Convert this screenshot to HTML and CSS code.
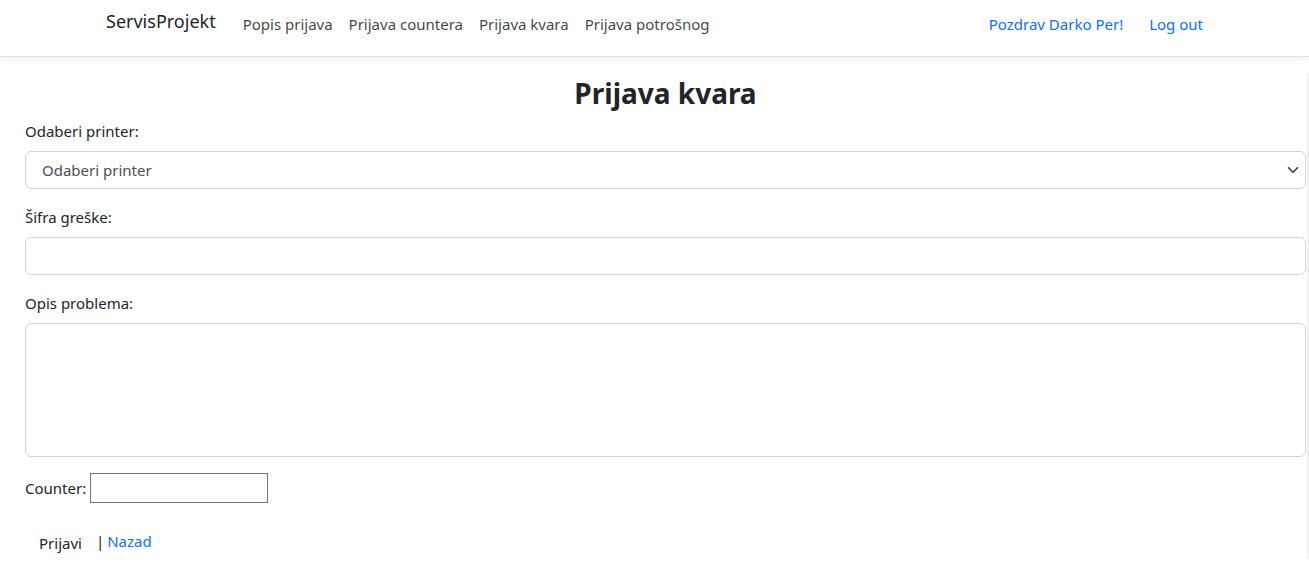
FILE: index.html
```html
<!DOCTYPE html>
<html lang="hr">
<head>
<meta charset="utf-8">
<title>Prijava kvara</title>
<link rel="stylesheet" href="styles.css">
</head>
<body>
<header class="navbar">
  <div class="nav-inner">
    <a class="brand" href="#">ServisProjekt</a>
    <nav class="nav-links">
      <a href="#">Popis prijava</a>
      <a href="#">Prijava countera</a>
      <a href="#">Prijava kvara</a>
      <a href="#">Prijava potrošnog</a>
    </nav>
    <div class="nav-user">
      <a href="#">Pozdrav Darko Per!</a>
      <a href="#">Log out</a>
    </div>
  </div>
</header>
<div class="page">
  <main class="content">
    <h1 class="title">Prijava kvara</h1>
    <form class="form">
      <div class="group">
        <label class="label">Odaberi printer:</label>
        <div class="select">
          <span>Odaberi printer</span>
          <svg width="12" height="8" viewBox="0 0 12 8"><path d="M1.5 1.8 6 6.2 10.5 1.8" fill="none" stroke="#343a40" stroke-width="1.6" stroke-linecap="round" stroke-linejoin="round"/></svg>
        </div>
      </div>
      <div class="group">
        <label class="label">Šifra greške:</label>
        <input class="control" type="text">
      </div>
      <div class="group">
        <label class="label">Opis problema:</label>
        <textarea class="control area"></textarea>
      </div>
      <div class="counter-row">
        <span>Counter:</span>
        <input class="counter" type="text">
      </div>
      <div class="actions">
        <button class="submit" type="button">Prijavi</button>
        <span class="sep">|</span>
        <a class="back" href="#">Nazad</a>
      </div>
    </form>
  </main>
  <div class="scroll-strip"></div>
</div>
</body>
</html>
```
FILE: styles.css
```css
* { box-sizing: border-box; }
html, body { margin: 0; padding: 0; }
body {
  font-family: "Noto Sans", "Open Sans", sans-serif;
  font-size: 15px;
  color: #212529;
  background: #fff;
  width: 1309px;
  height: 569px;
  overflow: hidden;
}
a { text-decoration: none; }

.navbar {
  height: 57px;
  border-bottom: 1px solid #dee2e6;
  box-shadow: 0 3px 8px rgba(0,0,0,0.05);
  position: relative;
  z-index: 1;
}
.nav-inner {
  display: flex;
  align-items: center;
  height: 100%;
  padding: 0 106px 8px 106px;
}
.brand {
  color: #212529;
  font-size: 18px;
  margin-right: 27px;
  position: relative;
  top: -3px;
}
.nav-links { display: flex; gap: 16px; }
.nav-links a { color: rgba(0,0,0,0.75); }
.nav-user { margin-left: auto; display: flex; gap: 26px; margin-right: 0; }
.nav-user a { color: #0d6efd; }

.page { display: flex; }
.content { flex: 1; padding: 0 1px 0 25px; }
.scroll-strip { width: 2px; background: #f0f0f0; margin-top: 16px; }

.title {
  text-align: center;
  font-size: 28px;
  font-weight: 700;
  margin: 16px 0 6px;
  line-height: 40px;
}
.group { margin-bottom: 16px; }
.label { display: block; line-height: 24px; margin-bottom: 8px; }
.control, .select {
  display: block;
  width: 100%;
  height: 38px;
  border: 1px solid #ced4da;
  border-radius: 6px;
  font: inherit;
  background: #fff;
}
.select {
  display: flex;
  align-items: center;
  justify-content: space-between;
  padding: 0 6px 0 16px;
  color: #495057;
}
.area { height: 134px; resize: none; }
.counter-row { display: flex; align-items: center; gap: 4px; margin-top: 16px; }
.counter {
  width: 178px;
  height: 30px;
  border: 1px solid #767676;
  border-radius: 0;
  font: inherit;
}
.actions { display: flex; align-items: center; margin-top: 24px; }
.submit {
  font: inherit;
  color: #212529;
  background: transparent;
  border: none;
  padding: 6px 14px;
  position: relative;
  top: 0;
}
.sep { margin-left: 0; margin-right: 3px; position: relative; top: -2px; }
.back { color: #0d6efd; position: relative; top: -2px; }
```
